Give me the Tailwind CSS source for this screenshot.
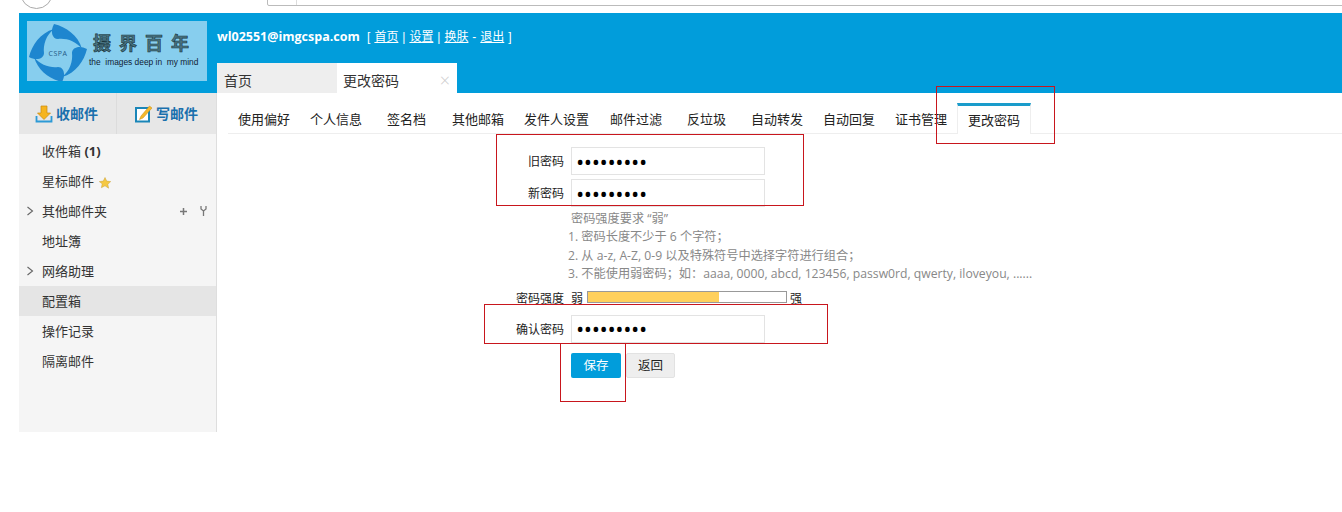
<!DOCTYPE html>
<html lang="zh-CN">
<head>
    <meta charset="UTF-8">
    <title>更改密码 - 摄界百年</title>
    <script src="https://cdn.jsdelivr.net/npm/@tailwindcss/browser@4"></script>
</head>
<body class="bg-white font-['Open_Sans','Noto_Sans_CJK_SC',sans-serif] text-[13px] text-[#333]">
<div class="relative w-[1342px] h-[512px] overflow-hidden">
    <!-- browser chrome left over at the top of the capture -->
    <div class="relative h-[13px]">
        <div class="absolute left-[20px] top-[-24px] w-[33px] h-[33px] rounded-full border border-[#aaa]"></div>
        <div class="absolute left-[267px] top-[-10px] w-[1090px] h-[16px] border border-[#bbb] rounded-[2px]">
            <div class="ml-[28px] w-px h-full bg-[#ddd]"></div>
        </div>
    </div>

    <div class="ml-[19px]">
        <!-- header -->
        <header class="h-[80px] bg-[#019ddb] flex">
            <div class="w-[198px] pl-[8px] pt-[8px]">
                <div class="relative w-[180px] h-[60px] bg-[#87ceee] overflow-hidden">
                    <svg class="absolute left-0 top-0" width="62" height="62" viewBox="-31 -32 62 62">
                        <g fill="#1e86cf">
                            <path d="M-4-29C8-26 20-18 24-4 18-12 8-15 0-14-6-14-8-22-4-29Z"/>
                            <path transform="rotate(90)" d="M-4-29C8-26 20-18 24-4 18-12 8-15 0-14-6-14-8-22-4-29Z"/>
                            <path transform="rotate(180)" d="M-4-29C8-26 20-18 24-4 18-12 8-15 0-14-6-14-8-22-4-29Z"/>
                            <path transform="rotate(270)" d="M-4-29C8-26 20-18 24-4 18-12 8-15 0-14-6-14-8-22-4-29Z"/>
                        </g>
                        <text x="0" y="3" text-anchor="middle" font-size="7" fill="#245a86" font-family="Open Sans" letter-spacing=".5">CSPA</text>
                    </svg>
                    <div class="absolute left-[66px] top-[9px] font-bold text-[18px] leading-[26px] tracking-[8px] text-[#4a7482] [-webkit-text-stroke:0.6px_#17343c] whitespace-nowrap">摄界百年</div>
                    <div class="absolute left-[62px] top-[36px] font-['Liberation_Sans',sans-serif] text-[8.400px] leading-[10px] text-[#123] whitespace-pre">the  images deep in  my mind</div>
                </div>
            </div>
            <div class="flex-1 flex flex-col">
                <div class="h-[50px] pt-[14px] text-white leading-[18px] whitespace-nowrap">
                    <b class="font-bold text-[12.500px]">wl02551@imgcspa.com</b>
                    <span class="ml-[4px] font-['Liberation_Sans','Noto_Sans_CJK_SC',sans-serif] text-[12px] [word-spacing:0.6px]">[ <a class="underline" href="#">首页</a> | <a class="underline" href="#">设置</a> | <a class="underline" href="#">换肤</a> - <a class="underline" href="#">退出</a> ]</span>
                </div>
                <div class="flex h-[30px] text-[14px] leading-[36px]">
                    <div class="w-[120px] pl-[7px] bg-[#eeeeee]">首页</div>
                    <div class="w-[120px] pl-[6px] bg-white flex justify-between pr-[7px]">
                        <span>更改密码</span>
                        <span class="text-[#ccc] text-[18px] font-light leading-[34px]">×</span>
                    </div>
                </div>
            </div>
        </header>

        <div class="flex">
            <!-- sidebar -->
            <aside class="w-[198px] h-[339px] bg-[#f5f5f5] border-r border-[#dedede] shrink-0">
                <div class="flex h-[41px] bg-[#e7e7e7] text-[14px] font-bold text-[#1a70ad]">
                    <div class="w-[98px] border-r border-[#dcdcdc] flex items-center pl-[16px] gap-[3px]">
                        <svg width="18" height="18" viewBox="0 0 18 18">
                            <path d="M6 1h6v7h3.500L9 14.500 2.500 8H6z" fill="#f6b41e" stroke="#c98a10" stroke-width=".7"/>
                            <path d="M1.500 11v5.500h15V11" fill="none" stroke="#2c9ad6" stroke-width="1.800"/>
                        </svg>
                        <span>收邮件</span>
                    </div>
                    <div class="flex-1 flex items-center pl-[18px] gap-[3px]">
                        <svg width="18" height="18" viewBox="0 0 18 18">
                            <rect x="1" y="3" width="13" height="13.500" fill="#fff" stroke="#1a86b8" stroke-width="2"/>
                            <path d="M14.500 1l2.500 2L8 13l-3.500 1.500L6 11z" fill="#f4b92c" stroke="#c98a10" stroke-width=".5"/>
                        </svg>
                        <span>写邮件</span>
                    </div>
                </div>
                <nav class="pt-[2px] leading-[30px] text-[13px]">
                    <div class="h-[30px] pl-[23px]">收件箱 <b class="font-bold">(1)</b></div>
                    <div class="h-[30px] pl-[23px] flex items-center gap-[5px]">
                        <span>星标邮件</span>
                        <svg width="12" height="12" viewBox="0 0 12 12" class="mt-[3px]"><path d="M6 .5l1.700 3.600 4 .5-2.900 2.700.8 3.900L6 8.800l-3.600 1.900.8-3.900L.3 4.600l4-.5z" fill="#f5c842" stroke="#c9a23a" stroke-width=".5"/></svg>
                    </div>
                    <div class="relative h-[30px] pl-[23px]">
                        <svg class="absolute left-[7px] top-[10px]" width="8" height="10" viewBox="0 0 8 10"><path d="M1.500 1l5 4-5 4" fill="none" stroke="#666" stroke-width="1.100"/></svg>
                        其他邮件夹
                        <svg class="absolute left-[160px] top-[11px]" width="9" height="9" viewBox="0 0 9 9"><path d="M4.500 1v7M1 4.500h7" stroke="#777" stroke-width="1.500"/></svg>
                        <svg class="absolute left-[181px] top-[10px]" width="7" height="10" viewBox="0 0 7 10"><path d="M1 0v3l2.500 2L6 3V0M3.500 5v5" fill="none" stroke="#777" stroke-width="1.300"/></svg>
                    </div>
                    <div class="h-[30px] pl-[23px]">地址簿</div>
                    <div class="relative h-[30px] pl-[23px]">
                        <svg class="absolute left-[7px] top-[10px]" width="8" height="10" viewBox="0 0 8 10"><path d="M1.500 1l5 4-5 4" fill="none" stroke="#666" stroke-width="1.100"/></svg>
                        网络助理
                    </div>
                    <div class="h-[30px] pl-[23px] bg-[#e5e5e5]">配置箱</div>
                    <div class="h-[30px] pl-[23px]">操作记录</div>
                    <div class="h-[30px] pl-[23px]">隔离邮件</div>
                </nav>
            </aside>

            <!-- settings -->
            <main class="flex-1 min-w-0">
                <div class="ml-[11px] h-[41px] border-b border-[#eeeeee] flex items-end text-[#222] leading-[30px] whitespace-nowrap">
                    <a class="w-[72px] h-[30px] pl-[10px] -mb-px" href="#">使用偏好</a>
                    <a class="w-[77px] h-[30px] pl-[10px] -mb-px" href="#">个人信息</a>
                    <a class="w-[65px] h-[30px] pl-[10px] -mb-px" href="#">签名档</a>
                    <a class="w-[72px] h-[30px] pl-[10px] -mb-px" href="#">其他邮箱</a>
                    <a class="w-[86px] h-[30px] pl-[10px] -mb-px" href="#">发件人设置</a>
                    <a class="w-[77px] h-[30px] pl-[10px] -mb-px" href="#">邮件过滤</a>
                    <a class="w-[64px] h-[30px] pl-[10px] -mb-px" href="#">反垃圾</a>
                    <a class="w-[72px] h-[30px] pl-[10px] -mb-px" href="#">自动转发</a>
                    <a class="w-[72px] h-[30px] pl-[10px] -mb-px" href="#">自动回复</a>
                    <a class="w-[72px] h-[30px] pl-[10px] -mb-px" href="#">证书管理</a>
                    <a class="w-[74px] h-[31px] pl-[10px] -mb-px bg-white border-x border-[#eeeeee] border-t-[3px] border-t-[#1a9ccb] leading-[29px]" href="#">更改密码</a>
                </div>

                <form class="pt-[13px] text-[12px]">
                    <div class="flex h-[32px]">
                        <label class="w-[354px] pr-[7px] text-right text-[#222] leading-[30px]">旧密码</label>
                        <input class="w-[194px] h-[28px] px-[4px] border border-[#e3e3e3] text-black text-[22px] tracking-[-0.4px]" type="password" value="123456789">
                    </div>
                    <div class="flex h-[32px]">
                        <label class="w-[354px] pr-[7px] text-right text-[#222] leading-[30px]">新密码</label>
                        <input class="w-[194px] h-[28px] px-[4px] border border-[#e3e3e3] text-black text-[22px] tracking-[-0.4px]" type="password" value="123456789">
                    </div>
                    <div class="ml-[351px] -mt-[1px] text-[#888] leading-[18.400px] text-[12.200px] whitespace-nowrap">
                        <p class="pl-[3px]">密码强度要求 “弱”</p>
                        <p>1. 密码长度不少于 6 个字符；</p>
                        <p>2. 从 a-z, A-Z, 0-9 以及特殊符号中选择字符进行组合；</p>
                        <p>3. 不能使用弱密码；如：aaaa, 0000, abcd, 123456, passw0rd, qwerty, iloveyou, ......</p>
                    </div>
                    <div class="flex h-[20px] mt-[5px] items-center text-[#222]">
                        <span class="w-[354px] pr-[7px] text-right">密码强度</span>
                        <span class="w-[16px]">弱</span>
                        <div class="w-[200px] h-[12px] mb-[3px] border border-[#999] bg-white">
                            <div class="h-full bg-[#ffd05c]" style="width: 66%"></div>
                        </div>
                        <span class="ml-[3px]">强</span>
                    </div>
                    <div class="flex h-[32px] mt-[6px]">
                        <label class="w-[354px] pr-[7px] text-right text-[#222] leading-[30px]">确认密码</label>
                        <input class="w-[194px] h-[28px] px-[4px] border border-[#e3e3e3] text-black text-[22px] tracking-[-0.4px]" type="password" value="123456789">
                    </div>
                    <div class="flex gap-[5px] ml-[354px] mt-[6px]">
                        <button type="button" class="w-[50px] h-[25px] pt-[2px] rounded-[2px] bg-[#019ddb] text-white text-[12.500px]">保存</button>
                        <button type="button" class="w-[49px] h-[25px] pt-[2px] rounded-[2px] bg-[#eeeeee] border border-[#e2e2e2] text-[#222] text-[12.500px]">返回</button>
                    </div>
                </form>
            </main>
        </div>
    </div>

    <!-- red annotation boxes drawn over the page -->
    <div class="absolute left-[496px] top-[134px] w-[308px] h-[72px] border border-[#c8161d]"></div>
    <div class="absolute left-[936px] top-[86px] w-[119px] h-[58px] border border-[#c8161d]"></div>
    <div class="absolute left-[484px] top-[304px] w-[344px] h-[40px] border border-[#c8161d]"></div>
    <div class="absolute left-[560px] top-[343px] w-[66px] h-[59px] border border-[#c8161d]"></div>
</div>
</body>
</html>
